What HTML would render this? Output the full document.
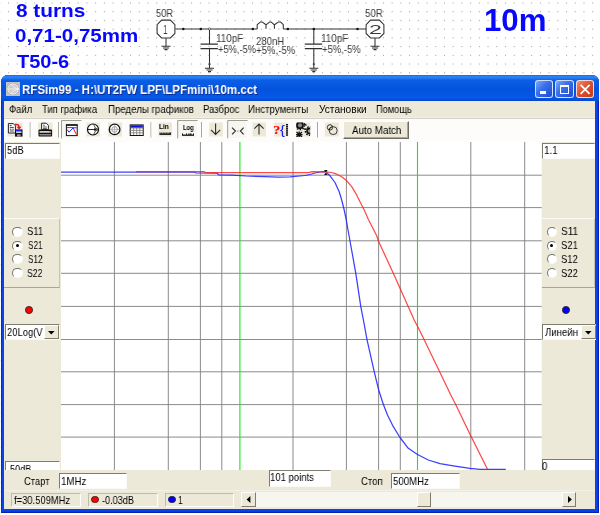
<!DOCTYPE html>
<html><head><meta charset="utf-8"><title>RFSim99 - 10m.cct</title>
<style>
html,body{margin:0;padding:0;}
body{width:600px;height:515px;overflow:hidden;position:relative;background:#fff;font-family:"Liberation Sans",sans-serif;}
.t{will-change:transform;position:absolute;white-space:nowrap;line-height:1;transform-origin:0 0;color:#000;font-family:"Liberation Sans",sans-serif;}
.a{position:absolute;}
svg{position:absolute;overflow:visible;}
#win{position:absolute;left:1px;top:75px;width:598px;height:438.3px;background:#0c42ea;border-radius:7px 7px 0 0;overflow:hidden;box-shadow:inset -1.2px -1.2px 0 0 #0a22b4, inset 1px 0 0 0 #0a2cc4;}
#title{position:absolute;left:0;top:0;width:598px;height:26px;background:linear-gradient(#1a6af0 0,#2f86f6 8%,#0c5ee6 20%,#0553dd 55%,#0558e8 88%,#0447c8 100%);}
#client{position:absolute;left:3.3px;top:25.7px;width:591px;height:408.4px;background:#ece9d8;overflow:hidden;}
.sunk{position:absolute;background:#fff;box-sizing:border-box;border-top:1px solid #7f7d70;border-left:1px solid #7f7d70;border-bottom:1px solid #fbfaf6;border-right:1px solid #fbfaf6;overflow:hidden;}
.stat{position:absolute;box-sizing:border-box;border-top:1px solid #bfbba8;border-left:1px solid #bfbba8;border-bottom:1px solid #fff;border-right:1px solid #fff;}
.rad{position:absolute;width:10.2px;height:10.2px;border-radius:50%;background:#fff;box-sizing:border-box;border:1.2px solid;border-color:#77756a #fbfaf6 #fbfaf6 #77756a;transform:rotate(0deg);}
.rad.on::after{content:"";position:absolute;left:2.4px;top:2.4px;width:3px;height:3px;border-radius:50%;background:#000;}
.btn{position:absolute;background:#ece9d8;box-sizing:border-box;border-top:1px solid #fff;border-left:1px solid #fff;border-bottom:1px solid #7f7c6e;border-right:1px solid #7f7c6e;}
</style></head><body>

<svg width="600" height="515" style="left:0;top:0"><defs><pattern id="dp" x="-0.76" y="2.5" width="8.72" height="8.72" patternUnits="userSpaceOnUse"><rect x="0" y="0" width="1" height="1" fill="#9c9c9c"/></pattern></defs><rect width="600" height="515" fill="url(#dp)"/></svg>
<span class="t" style="left:15.99px;top:1.54px;font-size:18.50px;font-weight:bold;transform:scaleX(1.1247);color:#0808ff;">8 turns</span>
<span class="t" style="left:14.97px;top:26.54px;font-size:18.50px;font-weight:bold;transform:scaleX(1.1093);color:#0808ff;">0,71-0,75mm</span>
<span class="t" style="left:16.50px;top:52.54px;font-size:18.50px;font-weight:bold;transform:scaleX(1.0811);color:#0808ff;">T50-6</span>
<span class="t" style="left:484.06px;top:4.98px;font-size:30.50px;font-weight:bold;transform:scaleX(1.0236);color:#0808ff;">10m</span>
<svg width="600" height="76" style="left:0;top:0"><path d="M175.3 28.9H257.2M283.3 28.9H366" stroke="#303030" stroke-width="1.05" fill="none"/><path d="M257.2 28.9V24.6L260.6 21.9H262L266 24.8V28.8M266 24.8L269.8 21.9H271L274.4 24.8V28.8M274.4 24.8L278.6 21.9H280.4L283.3 24.6V28.9" stroke="#303030" stroke-width="1.05" fill="none" stroke-linejoin="round"/><polygon points="161.6,20.1 170.4,20.1 174.9,24.6 174.9,33.5 170.4,37.9 161.6,37.9 157.1,33.5 157.1,24.6" fill="#fff" stroke="#303030" stroke-width="1.05"/><path d="M166 38.2V46.3" stroke="#303030" stroke-width="1.05"/><path d="M161.5 46.3H170.5M163.0 48.0H169.0M164.5 49.6H167.5" stroke="#303030" stroke-width="1.05" fill="none"/><polygon points="370.6,20.1 379.4,20.1 383.9,24.6 383.9,33.5 379.4,37.9 370.6,37.9 366.1,33.5 366.1,24.6" fill="#fff" stroke="#303030" stroke-width="1.05"/><path d="M375 38.2V46.3" stroke="#303030" stroke-width="1.05"/><path d="M370.5 46.3H379.5M372.0 48.0H378.0M373.5 49.6H376.5" stroke="#303030" stroke-width="1.05" fill="none"/><path d="M209.5 28.9V44.2M209.5 48.7V64.2V68.3" stroke="#303030" stroke-width="1.05" fill="none"/><path d="M200.5 44.2H217.9M200.5 48.7H217.9" stroke="#303030" stroke-width="1.3" fill="none"/><path d="M205.0 68.3H214.0M206.5 70.0H212.5M208.0 71.6H211.0" stroke="#303030" stroke-width="1.05" fill="none"/><circle cx="209.5" cy="64.2" r="1.1" fill="#444"/><path d="M313.8 28.9V44.2M313.8 48.7V64.2V68.3" stroke="#303030" stroke-width="1.05" fill="none"/><path d="M304.8 44.2H322.2M304.8 48.7H322.2" stroke="#303030" stroke-width="1.3" fill="none"/><path d="M309.3 68.3H318.3M310.8 70.0H316.8M312.3 71.6H315.3" stroke="#303030" stroke-width="1.05" fill="none"/><circle cx="313.8" cy="64.2" r="1.1" fill="#444"/><circle cx="183.3" cy="28.9" r="1.25" fill="#111"/><circle cx="200.8" cy="28.9" r="1.25" fill="#111"/><circle cx="252.8" cy="28.9" r="1.25" fill="#111"/><circle cx="287.8" cy="28.9" r="1.25" fill="#111"/><circle cx="313.8" cy="28.9" r="1.25" fill="#111"/><circle cx="357.5" cy="28.9" r="1.25" fill="#111"/><circle cx="209.5" cy="28.9" r="1.1" fill="#fff" stroke="#303030" stroke-width="0.7"/></svg>
<span class="t" style="left:156.00px;top:7.53px;font-size:10.60px;transform:scaleX(0.8742);color:#383838;">50R</span>
<span class="t" style="left:365.15px;top:7.53px;font-size:10.60px;transform:scaleX(0.9167);color:#383838;">50R</span>
<span class="t" style="left:216.44px;top:33.33px;font-size:10.60px;transform:scaleX(0.9303);color:#383838;">110pF</span>
<span class="t" style="left:218.00px;top:43.63px;font-size:10.60px;transform:scaleX(0.8775);color:#383838;">+5%,-5%</span>
<span class="t" style="left:256.09px;top:35.53px;font-size:10.60px;transform:scaleX(0.9042);color:#383838;">280nH</span>
<span class="t" style="left:256.20px;top:45.13px;font-size:10.60px;transform:scaleX(0.9096);color:#383838;">+5%,-5%</span>
<span class="t" style="left:320.61px;top:33.33px;font-size:10.60px;transform:scaleX(0.9303);color:#383838;">110pF</span>
<span class="t" style="left:322.47px;top:43.63px;font-size:10.60px;transform:scaleX(0.8930);color:#383838;">+5%,-5%</span>
<span class="t" style="left:162.66px;top:23.01px;font-size:13.00px;transform:scaleX(0.6276);color:#383838;">1</span>
<span class="t" style="left:368.80px;top:23.20px;font-size:13.00px;transform:scaleX(1.7720);color:#383838;">2</span>
<div id="win"><div id="title"></div><div id="client"></div></div>
<svg width="14" height="14" style="left:6px;top:82px" viewBox="0 0 14 14"><rect width="14" height="14" fill="#c2c2c2"/><circle cx="7" cy="7" r="5.7" fill="#cdcdcd" stroke="#8f8f8f" stroke-width="0.5"/><circle cx="7" cy="7" r="5.2" fill="none" stroke="#f6f6f6" stroke-width="0.8"/><path d="M1.4 7H12.6M12.6 7Q8 7.5 5 12M12.6 7Q8 6.5 5 2" stroke="#f4f4f4" stroke-width="0.9" fill="none"/></svg>
<span class="t" style="left:21.99px;top:84.28px;font-size:12.90px;font-weight:bold;transform:scaleX(0.8968);color:#fff;text-shadow:0.8px 0.8px 0 #0b2a8a;">RFSim99 - H:\UT2FW LPF\LPFmini\10m.cct</span>
<div class="a" style="left:535.2px;top:80px;width:18.2px;height:18.4px;box-sizing:border-box;border:1px solid rgba(255,255,255,0.78);border-radius:3.2px;background:linear-gradient(135deg,#7ea6f8 0,#3a6fea 42%,#1d4cd2 100%);"></div><div class="a" style="left:539.6px;top:91.2px;width:6.4px;height:2.5px;background:#fff;"></div>
<div class="a" style="left:555.4px;top:80px;width:18.2px;height:18.4px;box-sizing:border-box;border:1px solid rgba(255,255,255,0.78);border-radius:3.2px;background:linear-gradient(135deg,#7ea6f8 0,#3a6fea 42%,#1d4cd2 100%);"></div><div class="a" style="left:559.6px;top:84.5px;width:9.8px;height:9.6px;box-sizing:border-box;border:1px solid #fff;border-top-width:2.6px;"></div>
<div class="a" style="left:575.8px;top:80px;width:18.2px;height:18.4px;box-sizing:border-box;border:1px solid rgba(255,255,255,0.78);border-radius:3.2px;background:linear-gradient(135deg,#ee9078 0,#dc5232 45%,#c43a14 100%);"></div><svg width="19" height="19" style="left:575.8px;top:80px"><path d="M4.6 4.8L13.6 13.8M13.6 4.8L4.6 13.8" stroke="#fff" stroke-width="1.7" stroke-linecap="butt"/></svg>
<span class="t" style="left:8.67px;top:104.72px;font-size:10.00px;transform:scaleX(0.9441);">Файл</span>
<span class="t" style="left:41.73px;top:104.60px;font-size:10.00px;transform:scaleX(0.9458);">Тип графика</span>
<span class="t" style="left:107.97px;top:104.60px;font-size:10.00px;transform:scaleX(0.9672);">Пределы графиков</span>
<span class="t" style="left:202.95px;top:104.72px;font-size:10.00px;transform:scaleX(0.9550);">Разброс</span>
<span class="t" style="left:247.96px;top:104.60px;font-size:10.00px;transform:scaleX(0.9643);">Инструменты</span>
<span class="t" style="left:318.65px;top:104.60px;font-size:10.00px;transform:scaleX(1.0148);">Установки</span>
<span class="t" style="left:375.96px;top:104.78px;font-size:10.00px;transform:scaleX(0.9264);">Помощь</span>
<div class="a" style="left:4.3px;top:119.3px;width:591.1px;height:22.8px;background:#fdfcfa;"></div>
<div class="a" style="left:4.3px;top:116.5px;width:591.1px;height:1.4px;background:#f2f0e4;"></div>
<div class="a" style="left:4.3px;top:117.8px;width:591.1px;height:1.6px;background:#d3d1c9;"></div>
<svg width="600" height="515" style="left:0;top:0"><rect x="61.0" y="142.0" width="480.70000000000005" height="328.0" fill="#fff"/><path d="M61.0 175.20H541.7M61.0 207.60H541.7M61.0 240.80H541.7M61.0 273.30H541.7M61.0 306.40H541.7M61.0 339.50H541.7M61.0 371.80H541.7M61.0 404.60H541.7M61.0 437.10H541.7M114.40 142.0V470.0M168.30 142.0V470.0M200.40 142.0V470.0M221.80 142.0V470.0M293.00 142.0V470.0M346.40 142.0V470.0M378.60 142.0V470.0M400.30 142.0V470.0M470.80 142.0V470.0M524.70 142.0V470.0" stroke="#7e7e7e" stroke-width="0.9" fill="none"/><path d="M239.90 142.0V470.0M417.50 142.0V470.0" stroke="#19e619" stroke-width="1.1" fill="none"/><polyline points="61,172 194,172 196,173 217,173.2 219,175 232,175.2 246,176 265,176.6 278,177.2 290,176.8 300,176 305,175.5 310,174.5 315,173 320,172 324,171.6 326,172 330,175.8 335,182.5 339.2,191.7 341.7,200 344.2,210 346.3,220 348,230 350,241 355.8,273.3 360.8,306.7 363.8,322 367,339.7 374.2,371.7 378.7,390 383.3,404.2 387.5,415 393.3,426.7 400,437.5 408.3,448.3 417.5,454.5 428.3,460 440,463.7 453.3,465.8 470,468.3 480,469.3 505.8,469.3" fill="none" stroke="#1c1cff" stroke-width="1.25" stroke-opacity="0.85" stroke-linejoin="round"/><polyline points="136,171.6 204,171.6 206,172.7 309,172.7 312,171.7 326,171.8 331.7,172.5 336.7,174.2 341.7,176.7 346.7,180.8 351.7,186.7 355.8,193.3 360,201.7 364.2,210 368.3,219.2 372.5,227.5 376.7,235.8 378.3,240.8 393.3,273.3 408.3,306.7 414.2,320 417.5,326.3 424.2,339.7 440,372.5 450.8,395 455.8,404.7 470,434.2 487.5,469.2" fill="none" stroke="#ff1c1c" stroke-width="1.25" stroke-opacity="0.8" stroke-linejoin="round"/><path d="M324 169.9H327.6L325.8 172.5L327.6 175.1H324L325.8 172.5Z" fill="#111"/><rect x="325.3" y="172" width="1" height="1" fill="#cc0"/></svg>
<div class="a" style="left:4.3px;top:142px;width:56.7px;height:328px;background:#ece9d8;"></div>
<div class="sunk" style="left:4.7px;top:142.6px;width:55.5px;height:16.6px;"></div>
<div class="a" style="left:4.3px;top:217.6px;width:56.1px;height:70px;box-sizing:border-box;border-top:1px solid #fbfaf5;border-bottom:1px solid #aaa694;border-right:1px solid #c8c4b2;"></div>
<div class="sunk" style="left:4.7px;top:461.2px;width:55.5px;height:14px;border-top-width:1.3px;"></div>
<div class="sunk" style="left:4.7px;top:323.6px;width:55.7px;height:16.9px;"></div>
<div class="btn" style="left:44.1px;top:325px;width:14.7px;height:14.2px;"></div>
<svg width="8" height="5" style="left:48.1px;top:330.5px"><path d="M0 0H6.6L3.3 3.4Z" fill="#000"/></svg>
<div class="rad" style="left:12.4px;top:226.6px;"></div>
<span class="t" style="left:27.15px;top:226.43px;font-size:11.20px;transform:scaleX(0.8485);">S11</span>
<div class="rad on" style="left:12.4px;top:240.5px;"></div>
<span class="t" style="left:28.00px;top:239.72px;font-size:11.20px;transform:scaleX(0.7276);">S21</span>
<div class="rad" style="left:12.4px;top:254.3px;"></div>
<span class="t" style="left:28.00px;top:253.52px;font-size:11.20px;transform:scaleX(0.7276);">S12</span>
<div class="rad" style="left:12.4px;top:268.2px;"></div>
<span class="t" style="left:27.28px;top:268.44px;font-size:11.20px;transform:scaleX(0.7698);">S22</span>
<div class="a" style="left:25.3px;top:306.1px;width:7.8px;height:7.8px;border-radius:50%;background:#f00;box-sizing:border-box;border:0.7px solid #402020;"></div>
<div class="a" style="left:541.7px;top:142px;width:53.69999999999993px;height:328px;background:#ece9d8;"></div>
<div class="sunk" style="left:542.1px;top:142.6px;width:52.49999999999993px;height:16.6px;"></div>
<div class="a" style="left:541.7px;top:217.6px;width:53.09999999999993px;height:70px;box-sizing:border-box;border-top:1px solid #fbfaf5;border-bottom:1px solid #aaa694;border-right:1px solid #c8c4b2;"></div>
<div class="sunk" style="left:542.1px;top:458.7px;width:52.49999999999993px;height:14px;border-top-width:1.3px;"></div>
<div class="sunk" style="left:542.1px;top:323.6px;width:54.09999999999993px;height:16.9px;"></div>
<div class="btn" style="left:581.1999999999999px;top:325px;width:14.7px;height:14.2px;"></div>
<svg width="8" height="5" style="left:585.1999999999999px;top:330.5px"><path d="M0 0H6.6L3.3 3.4Z" fill="#000"/></svg>
<div class="rad" style="left:546.9px;top:226.6px;"></div>
<span class="t" style="left:560.96px;top:225.82px;font-size:11.20px;transform:scaleX(0.8996);">S11</span>
<div class="rad on" style="left:546.9px;top:240.5px;"></div>
<span class="t" style="left:561.40px;top:240.23px;font-size:11.20px;transform:scaleX(0.8477);">S21</span>
<div class="rad" style="left:546.9px;top:254.3px;"></div>
<span class="t" style="left:561.40px;top:253.52px;font-size:11.20px;transform:scaleX(0.8423);">S12</span>
<div class="rad" style="left:546.9px;top:268.2px;"></div>
<span class="t" style="left:561.40px;top:268.43px;font-size:11.20px;transform:scaleX(0.8423);">S22</span>
<div class="a" style="left:562.4px;top:306.1px;width:7.8px;height:7.8px;border-radius:50%;background:#00f;box-sizing:border-box;border:0.7px solid #402020;"></div>
<span class="t" style="left:7.41px;top:144.72px;font-size:11.20px;transform:scaleX(0.8333);">5dB</span>
<span class="t" style="left:544.10px;top:145.23px;font-size:11.20px;transform:scaleX(0.8844);">1.1</span>
<span class="t" style="left:6.72px;top:327.14px;font-size:11.20px;transform:scaleX(0.8421);">20Log(V</span>
<span class="t" style="left:544.71px;top:327.12px;font-size:11.20px;transform:scaleX(0.8595);">Линейн</span>
<span class="t" style="left:7.21px;top:464.35px;font-size:11.20px;transform:scaleX(0.8099);">-50dB</span>
<span class="t" style="left:541.84px;top:461.11px;font-size:11.20px;transform:scaleX(0.8733);">0</span>
<div class="a" style="left:4.5px;top:470px;width:590.9px;height:39.3px;background:#ece9d8;"></div>
<span class="t" style="left:24.49px;top:476.08px;font-size:11.20px;transform:scaleX(0.8403);">Старт</span>
<div class="sunk" style="left:59.2px;top:473px;width:67.6px;height:16px;"></div>
<span class="t" style="left:60.88px;top:476.05px;font-size:11.20px;transform:scaleX(0.8700);">1MHz</span>
<div class="sunk" style="left:268.6px;top:470.2px;width:62.3px;height:16.6px;"></div>
<span class="t" style="left:269.77px;top:471.82px;font-size:11.20px;transform:scaleX(0.8502);">101 points</span>
<span class="t" style="left:360.89px;top:476.05px;font-size:11.20px;transform:scaleX(0.8566);">Стоп</span>
<div class="sunk" style="left:391.2px;top:473px;width:68.6px;height:16px;"></div>
<span class="t" style="left:392.99px;top:475.94px;font-size:11.20px;transform:scaleX(0.8614);">500MHz</span>
<div class="a" style="left:4.3px;top:489.9px;width:591.1px;height:1px;background:#f3f1e7;"></div>
<div class="stat" style="left:11.3px;top:492.5px;width:70.0px;height:14.2px;"></div>
<div class="stat" style="left:88.3px;top:492.5px;width:69.7px;height:14.2px;"></div>
<div class="stat" style="left:164.7px;top:492.5px;width:69.5px;height:14.2px;"></div>
<span class="t" style="left:13.73px;top:494.94px;font-size:11.20px;transform:scaleX(0.8398);">f=30.509MHz</span>
<div class="a" style="left:91.4px;top:496.1px;width:7.2px;height:7.2px;border-radius:50%;background:#f00;box-sizing:border-box;border:0.7px solid #402020;"></div>
<span class="t" style="left:101.65px;top:495.15px;font-size:11.20px;transform:scaleX(0.8161);">-0.03dB</span>
<div class="a" style="left:168.4px;top:496.1px;width:7.2px;height:7.2px;border-radius:50%;background:#00f;box-sizing:border-box;border:0.7px solid #202040;"></div>
<span class="t" style="left:178.02px;top:494.97px;font-size:11.20px;transform:scaleX(0.7692);">1</span>
<div class="a" style="left:240.5px;top:492px;width:335.3px;height:14.7px;background:#f6f5ee;"></div>
<div class="btn" style="left:240.5px;top:492px;width:15.3px;height:14.7px;"></div>
<svg width="6" height="8" style="left:245.6px;top:495.6px"><path d="M4.4 0V7L0.6 3.5Z" fill="#000"/></svg>
<div class="btn" style="left:561.8px;top:492px;width:14px;height:14.7px;"></div>
<svg width="6" height="8" style="left:566.6px;top:495.6px"><path d="M1 0V7L4.8 3.5Z" fill="#000"/></svg>
<div class="btn" style="left:417px;top:492px;width:13.8px;height:14.7px;"></div>
<svg width="600" height="30" viewBox="0 115 600 30" style="left:0;top:115px"><rect x="29.7" y="122" width="1" height="15.5" fill="#a8a595"/><rect x="30.7" y="122" width="0.9" height="15.5" fill="#fff"/><rect x="58.0" y="122" width="1" height="15.5" fill="#a8a595"/><rect x="59.0" y="122" width="0.9" height="15.5" fill="#fff"/><rect x="150.5" y="122" width="1" height="15.5" fill="#a8a595"/><rect x="151.5" y="122" width="0.9" height="15.5" fill="#fff"/><rect x="201.0" y="122" width="1" height="15.5" fill="#a8a595"/><rect x="202.0" y="122" width="0.9" height="15.5" fill="#fff"/><rect x="317.0" y="122" width="1" height="15.5" fill="#a8a595"/><rect x="318.0" y="122" width="0.9" height="15.5" fill="#fff"/><rect x="61.0" y="120" width="20.599999999999994" height="18.6" fill="#f7f6f0"/><path d="M61.5 138.6V120.5H81.6" stroke="#a19e90" stroke-width="1" fill="none"/><path d="M61.5 138.3H81.1V120.8" stroke="#fff" stroke-width="1" fill="none"/><rect x="177.2" y="120" width="20.600000000000023" height="18.6" fill="#f7f6f0"/><path d="M177.7 138.6V120.5H197.8" stroke="#a19e90" stroke-width="1" fill="none"/><path d="M177.7 138.3H197.3V120.8" stroke="#fff" stroke-width="1" fill="none"/><rect x="227.2" y="120" width="20.600000000000023" height="18.6" fill="#f7f6f0"/><path d="M227.7 138.6V120.5H247.8" stroke="#a19e90" stroke-width="1" fill="none"/><path d="M227.7 138.3H247.3V120.8" stroke="#fff" stroke-width="1" fill="none"/><rect x="7.5" y="122.5" width="15.0" height="14" fill="#ece9d8"/><rect x="38" y="122.5" width="14.5" height="14" fill="#ece9d8"/><rect x="86.5" y="122.5" width="13.5" height="14" fill="#ece9d8"/><rect x="108" y="122.5" width="14" height="14" fill="#ece9d8"/><rect x="158.5" y="122.5" width="13.5" height="14" fill="#ece9d8"/><rect x="209.2" y="122.5" width="13.600000000000023" height="14" fill="#ece9d8"/><rect x="252.5" y="122.5" width="13.5" height="14" fill="#ece9d8"/><rect x="274" y="122.5" width="14.5" height="14" fill="#ece9d8"/><rect x="296" y="122.5" width="14" height="14" fill="#ece9d8"/><rect x="324.8" y="122.5" width="14.0" height="14" fill="#ece9d8"/><path d="M8.4 123.6H13.3L15.4 125.8V133H8.4Z" fill="#fff" stroke="#111" stroke-width="0.9"/><path d="M9.8 125.5H11.5M9.8 127.4H13.8M9.8 129.2H11.5M12.3 129.2H13.8M9.8 131H13.8" stroke="#111" stroke-width="0.8"/><rect x="15" y="129.4" width="7.5" height="7.2" fill="#111"/><rect x="16" y="130" width="5.5" height="1.4" fill="#22f"/><rect x="16" y="131.5" width="5.5" height="1.3" fill="#fff"/><rect x="17" y="134.3" width="3.6" height="2.3" fill="#999"/><path d="M15 124.6Q19 124 19 127" stroke="#e11" stroke-width="1.5" fill="none"/><path d="M16.6 126.8H21.6L19.1 129.6Z" fill="#e11"/><path d="M41.6 129.6V123.2H46.3L48.4 125.4V129.6Z" fill="#fff" stroke="#111" stroke-width="0.9"/><path d="M43 125.2H44.8M43 127H46.8M43 128.6H46.8" stroke="#111" stroke-width="0.7"/><rect x="38.5" y="129.6" width="13.6" height="7" rx="1" fill="#111"/><rect x="39.5" y="131" width="11.6" height="1.8" fill="#cfcfcf"/><rect x="49.3" y="131.1" width="1.4" height="1.5" fill="#f44"/><rect x="39.5" y="134.2" width="11.6" height="1.2" fill="#aaa"/><rect x="66.4" y="124.8" width="10.8" height="10.8" fill="#fff" stroke="#111" stroke-width="1"/><rect x="66" y="124.4" width="11.6" height="1.4" fill="#111"/><path d="M67 127.6H73L76.4 134.6" stroke="#f11" stroke-width="1" fill="none"/><path d="M67 129.4L69 132.2L73.2 127.8H76.6" stroke="#22f" stroke-width="1" fill="none"/><circle cx="93" cy="129.5" r="5.5" fill="#fff" stroke="#111" stroke-width="1.2"/><path d="M87.5 129.5H95" stroke="#111" stroke-width="0.9"/><path d="M94.3 127.8L97 129.5L94.3 131.2Z" fill="#111"/><path d="M98.4 129.5Q94.5 128.8 93.6 124.2M98.4 129.5Q94.5 130.2 93.6 134.8" stroke="#111" stroke-width="0.7" fill="none"/><circle cx="114.6" cy="129.4" r="5.3" fill="#fff" stroke="#111" stroke-width="1.3"/><circle cx="114.6" cy="129.4" r="2.8" fill="none" stroke="#888" stroke-width="0.8"/><path d="M110 129.4H119.2M114.6 124.8V134" stroke="#999" stroke-width="0.7"/><rect x="130.2" y="124.9" width="13" height="10.6" fill="#fff" stroke="#111" stroke-width="1"/><rect x="130.7" y="125.3" width="12" height="2.2" fill="#11d"/><path d="M130.7 127.9H142.7" stroke="#111" stroke-width="0.6"/><path d="M133.6 128V135M136.7 128V135M139.8 128V135M130.7 130.4H142.7M130.7 132.8H142.7" stroke="#777" stroke-width="0.8"/><path d="M159.5 134.2H171" stroke="#111" stroke-width="1.4"/><path d="M160 132.4V134M161.6 132.4V134M163.2 132.4V134M164.8 132.4V134M166.4 132.4V134M168 132.4V134M169.6 132.4V134M170.7 132.4V134" stroke="#111" stroke-width="0.8"/><path d="M182 135.2H194" stroke="#111" stroke-width="1.3"/><path d="M182.5 133.4V135M186.5 133.4V135M188.8 133.4V135M190.2 133.4V135M191 133.4V135M193.5 133.4V135" stroke="#111" stroke-width="0.9"/><path d="M215.6 123.6V134.4M211 129.9L215.6 134.5L220.2 129.9" stroke="#2b2b2b" stroke-width="1.1" fill="none"/><path d="M232 127.6L235.5 131L232 134.3M243.6 127.6L240.4 131L243.6 134.3" stroke="#2b2b2b" stroke-width="1.1" fill="none"/><rect x="237.5" y="130.6" width="1" height="1" fill="#667"/><path d="M259 124.2V134.6M254.4 128.7L259 124.1L263.6 128.7" stroke="#2b2b2b" stroke-width="1.1" fill="none"/><rect x="286" y="124.00" width="2" height="1.5" fill="#111"/><rect x="286" y="126.05" width="2" height="1.5" fill="#111"/><rect x="286" y="128.10" width="2" height="1.5" fill="#111"/><rect x="286" y="130.15" width="2" height="1.5" fill="#111"/><rect x="286" y="132.20" width="2" height="1.5" fill="#111"/><rect x="286" y="134.25" width="2" height="1.5" fill="#111"/><clipPath id="c13"><rect x="296" y="122.6" width="14.2" height="14.4"/></clipPath><g clip-path="url(#c13)"><circle cx="300" cy="125.3" r="3" fill="#888" stroke="#111" stroke-width="1.7"/><circle cx="300" cy="125.3" r="4.4" fill="none" stroke="#111" stroke-width="1.3" stroke-dasharray="1.5 1.3"/><circle cx="309.6" cy="131" r="2.6" fill="#999" stroke="#111" stroke-width="1.6"/><circle cx="309.6" cy="131" r="4.2" fill="none" stroke="#111" stroke-width="1.5" stroke-dasharray="1.6 1.2"/><path d="M296.5 132L302 137M302 132L296.5 137M296 134.6H302.5M299.2 131.5V137M304 123.5L306.5 125.5M303.5 128.5L305 129.5" stroke="#111" stroke-width="1.3"/></g><circle cx="333.2" cy="130.6" r="4" fill="none" stroke="#111" stroke-width="0.8"/><circle cx="330" cy="127.4" r="2.7" fill="none" stroke="#111" stroke-width="0.8"/><path d="M328.6 129.6L331.8 126.6" stroke="#111" stroke-width="0.7"/></svg>
<span class="t" style="left:159.15px;top:123.63px;font-size:6.60px;font-weight:bold;transform:scaleX(0.9570);">Lin</span>
<span class="t" style="left:183.03px;top:124.64px;font-size:6.60px;font-weight:bold;transform:scaleX(0.8840);">Log</span>
<span class="t" style="left:273.03px;top:123.52px;font-size:12.50px;font-weight:bold;transform:scaleX(1.1889);font-family:'Liberation Serif',serif;color:#f00;">?</span>
<span class="t" style="left:279.69px;top:123.00px;font-size:13.00px;transform:scaleX(1.1424);color:#11f;">{</span>
<div class="btn" style="left:343.4px;top:120.7px;width:65.4px;height:18.2px;border-bottom-color:#6f6d61;border-right-color:#6f6d61;"></div>
<div class="a" style="left:344.4px;top:136.9px;width:63.4px;height:1px;background:#aca899;"></div><div class="a" style="left:406.8px;top:121.7px;width:1px;height:16px;background:#aca899;"></div>
<span class="t" style="left:352.13px;top:124.52px;font-size:11.20px;transform:scaleX(0.8731);">Auto Match</span>
</body></html>
